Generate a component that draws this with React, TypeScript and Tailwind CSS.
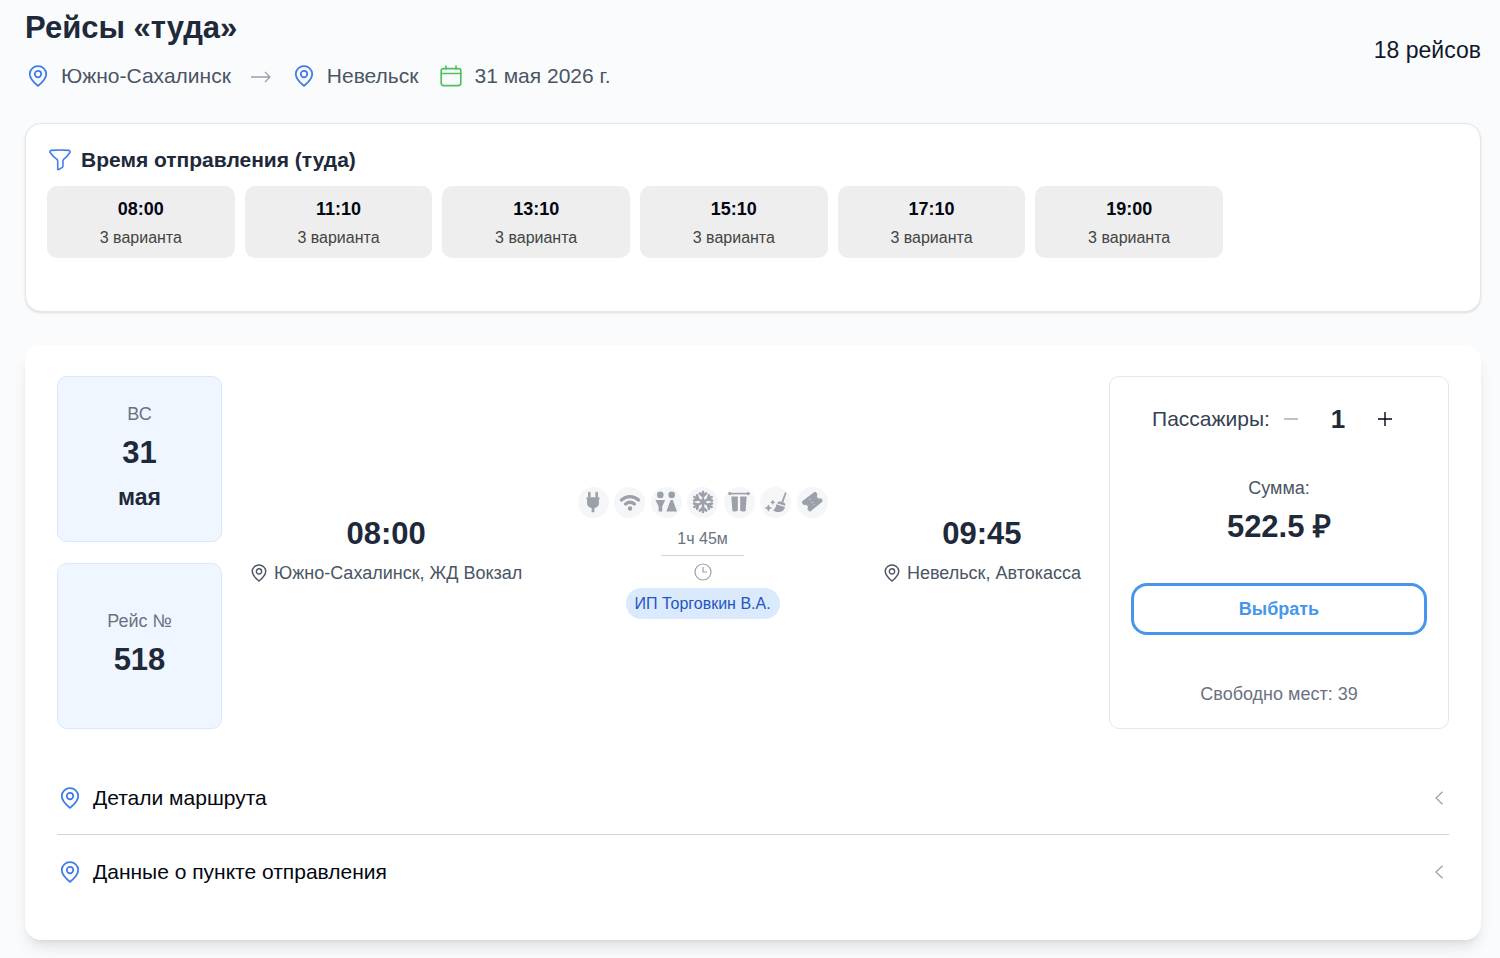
import React, { useState } from 'react';

type IconProps = { className?: string };

const PinIcon: React.FC<IconProps> = ({ className }) => (
  <svg className={className} viewBox="0 0 24 24" fill="none" stroke="currentColor" strokeWidth="1.9" strokeLinejoin="round" aria-hidden="true">
    <path d="M12 22.8c-2.600-2.200-9-7.200-9-13A8.900 8.900 0 0 1 12 1.300a8.900 8.900 0 0 1 9 8.500c0 5.800-6.400 10.800-9 13z" />
    <circle cx="12" cy="9.900" r="3.500" />
  </svg>
);

const ArrowIcon: React.FC<IconProps> = ({ className }) => (
  <svg className={className} viewBox="0 0 22 22" fill="none" stroke="currentColor" strokeWidth="1.300" aria-hidden="true">
    <path d="M1 12h19M15 7l5 5-5 5" />
  </svg>
);

const CalendarIcon: React.FC<IconProps> = ({ className }) => (
  <svg className={className} viewBox="0 0 24 24" fill="none" stroke="currentColor" strokeWidth="1.800" strokeLinecap="round" aria-hidden="true">
    <rect x="1.300" y="4" width="21.400" height="18.500" rx="2.500" />
    <path d="M1.500 9.300h21M6.500 1.300v3M17.500 1.300v3" />
  </svg>
);

const FilterIcon: React.FC<IconProps> = ({ className }) => (
  <svg className={className} viewBox="0 0 24 24" fill="none" stroke="currentColor" strokeWidth="1.700" strokeLinejoin="round" aria-hidden="true">
    <path d="M2.200 1.500c6.500-.5 13.100-.5 19.600 0 1.100.1 1.500 1.400.9 2.300-2.100 3.300-4.300 5.600-6.700 7.500-.6.500-.8 1-.8 1.700v5.700c0 .6-.2 1-.7 1.300l-4 2.500c-.5.300-1 0-1-.6V13c0-.7-.2-1.200-.8-1.700C6 9.400 3.500 7.100 1.300 3.800c-.6-.9-.2-2.200.9-2.300z" />
  </svg>
);

const ClockIcon: React.FC<IconProps> = ({ className }) => (
  <svg className={className} viewBox="0 0 18 18" fill="none" stroke="currentColor" strokeWidth="1.200" aria-hidden="true">
    <circle cx="9" cy="9" r="8" />
    <path d="M9 4v5h4" />
  </svg>
);

const ChevronIcon: React.FC<IconProps> = ({ className }) => (
  <svg className={className} viewBox="0 0 8 14" fill="none" stroke="currentColor" strokeWidth="1.300" aria-hidden="true">
    <path d="M7.500 .7L1 7l6.500 6.300" />
  </svg>
);

const PlugIcon = () => (
  <svg className="size-6" viewBox="0 0 24 24" fill="currentColor" aria-hidden="true">
    <rect x="7" y="1.800" width="2.600" height="6" rx="1.200" />
    <rect x="14.400" y="1.800" width="2.600" height="6" rx="1.200" />
    <path d="M5.600 7.200h12.800v2.200h-.5v4c0 2.500-2 4-4.500 4.600v4.200h-2.800V18c-2.500-.6-4.500-2.100-4.500-4.600v-4h-.5z" />
  </svg>
);

const WifiIcon = () => (
  <svg className="size-6" viewBox="0 0 24 24" fill="none" stroke="currentColor" strokeWidth="3.300" strokeLinecap="round" aria-hidden="true">
    <path d="M3.400 10c5-4.500 12.200-4.500 17.200 0M7.600 14c2.700-2.200 6.100-2.200 8.800 0" />
    <circle cx="12" cy="18.500" r="2.200" fill="currentColor" stroke="none" />
  </svg>
);

const RestroomIcon = () => (
  <svg className="size-6" viewBox="0 0 24 24" fill="currentColor" aria-hidden="true">
    <circle cx="6.300" cy="4.900" r="3.300" />
    <circle cx="17.700" cy="4.900" r="3.300" />
    <path d="M1.400 10h9.800L8.200 16.500v5H4.600v-5zM16.600 10h2.200l4.200 11.500H12.400z" />
  </svg>
);

const SnowflakeIcon = () => (
  <svg className="size-6" viewBox="0 0 24 24" fill="none" stroke="currentColor" strokeWidth="2.500" strokeLinecap="round" aria-hidden="true">
    <path d="M12 2v20M8.800 3.300L12 6.500l3.200-3.200M8.800 20.700l3.200-3.200 3.200 3.200" />
    <path d="M3.300 7l17.400 10M3 10.500l4.200-1.100L6.100 5.200M21 13.500l-4.200 1.100 1.100 4.200" />
    <path d="M20.700 7L3.300 17M21 10.500l-4.200-1.100 1.100-4.200M3 13.500l4.200 1.100-1.100 4.200" />
  </svg>
);

const CurtainIcon = () => (
  <svg className="size-6" viewBox="0 0 24 24" fill="currentColor" aria-hidden="true">
    <path d="M2.500 2.800h19v1.600h-19z" />
    <circle cx="2.800" cy="3.600" r="1.600" />
    <circle cx="21.200" cy="3.600" r="1.600" />
    <path d="M4.300 6.500h6.500v14.300c-1.700 1-3.700 1.100-5.400.2zM13.200 6.500h6.500l-1.100 14.500c-1.700.9-3.700.8-5.400-.2z" />
  </svg>
);

const BroomIcon = () => (
  <svg className="size-6" viewBox="0 0 24 24" fill="currentColor" aria-hidden="true">
    <path d="M21 2.300l1.500.6-3.500 10-1.700-.6z" />
    <path d="M14.500 11.800c2.600-.7 5.300.2 7 2.300l-.5 1.600-8.200-2.500zM12.300 14.300l8.600 2.700c-.3 2.500-1.900 4.100-4.300 4.700-2.900.6-5.900.1-7.600-1.800 1.800-.6 3-2.500 3.300-5.600z" />
    <path d="M4.400 14.800l.9 2.300 2.300.9-2.300.9-.9 2.300-.9-2.300-2.300-.9 2.300-.9zM8.700 10.200l.6 1.500 1.500.6-1.500.6-.6 1.500-.6-1.500-1.500-.6 1.500-.6z" stroke="currentColor" strokeWidth=".6" />
  </svg>
);

const TicketIcon = () => (
  <svg className="size-6" viewBox="0 0 24 24" fill="currentColor" aria-hidden="true">
    <path d="M14 2.300a1.600 1.600 0 0 1 2.200.2l1.500 1.800a2.500 2.500 0 0 0 3.200 3.800l1.300 1.600c.6.700.5 1.700-.2 2.300L11 20.900a1.600 1.600 0 0 1-2.300-.2l-1.400-1.700a2.500 2.500 0 0 0-3.300-3.700l-1.700-2c-.6-.7-.5-1.700.2-2.300z" />
    <path d="M9.800 9.300l.7.900M12 12l.7.900M14 14.400l.5.700" stroke="#f5f6f8" strokeWidth="1" />
  </svg>
);

const amenities = [
  { title: 'Розетка', icon: PlugIcon },
  { title: 'Wi-Fi', icon: WifiIcon },
  { title: 'Туалет', icon: RestroomIcon },
  { title: 'Кондиционер', icon: SnowflakeIcon },
  { title: 'Шторки', icon: CurtainIcon },
  { title: 'Чистый салон', icon: BroomIcon },
  { title: 'Билет', icon: TicketIcon },
];

const departureTimes = ['08:00', '11:10', '13:10', '15:10', '17:10', '19:00'];

const sections = ['Детали маршрута', 'Данные о пункте отправления'];

const Stop: React.FC<{ time: string; place: string }> = ({ time, place }) => (
  <div className="flex flex-col items-center pb-1">
    <div className="text-[31px] leading-10 font-bold text-gray-800">{time}</div>
    <div className="mt-[5px] flex items-center gap-1.5 text-[18px] leading-7 text-gray-600">
      <PinIcon className="size-[18px]" />
      {place}
    </div>
  </div>
);

const App: React.FC = () => {
  const [selectedTime, setSelectedTime] = useState<string | null>(null);
  const [passengers, setPassengers] = useState(1);

  return (
    <div className="min-h-screen bg-[#fafbfd] pt-2 pr-[19px] pb-[17px] pl-[25px] font-['Liberation_Sans',Arial,sans-serif]">
      {/* Header */}
      <header className="flex items-center justify-between">
        <div>
          <h1 className="text-[31px] leading-10 font-bold text-gray-800">Рейсы «туда»</h1>
          <div className="mt-3 flex items-center text-[21px] leading-8 text-gray-600">
            <PinIcon className="mx-[2px] size-[22px] text-[#3f7bea]" />
            <span className="ml-2.5">Южно-Сахалинск</span>
            <ArrowIcon className="mx-[19px] size-[22px] text-gray-400" />
            <PinIcon className="mx-[2px] size-[22px] text-[#3f7bea]" />
            <span className="ml-2.5">Невельск</span>
            <CalendarIcon className="ml-[22px] size-[22px] text-[#4dc25c]" />
            <span className="ml-3">31 мая 2026 г.</span>
          </div>
        </div>
        <div className="text-[23px] leading-8 text-gray-900">18 рейсов</div>
      </header>

      {/* Departure time filter */}
      <section className="mt-[31px] rounded-2xl border border-gray-200 bg-white px-[21px] pt-5 pb-[53px] shadow-sm">
        <h2 className="flex items-center gap-2.5 text-[21px] leading-8 font-bold text-gray-800">
          <FilterIcon className="ml-[2px] size-[22px] text-[#3f7bea]" />
          Время отправления (туда)
        </h2>
        <div className="mt-2.5 grid max-w-[1176px] grid-cols-6 gap-2.5">
          {departureTimes.map(time => (
            <button
              key={time}
              onClick={() => setSelectedTime(time)}
              aria-pressed={selectedTime === time}
              className="flex cursor-pointer flex-col items-center rounded-[10px] bg-[#eeeeee] pt-2 pb-1.5"
            >
              <span className="text-[18px] leading-[30px] font-bold text-gray-950">{time}</span>
              <span className="text-[16px] leading-7 text-[#444444]">3 варианта</span>
            </button>
          ))}
        </div>
      </section>

      {/* Trip card */}
      <section className="mt-[33px] rounded-2xl bg-white px-8 py-[31px] shadow-lg">
        <div className="flex">
          <div className="flex w-[165px] flex-col gap-[21px]">
            <div className="flex h-[166px] flex-col items-center justify-center rounded-[10px] border border-[#dbe8fb] bg-[#f0f6ff] pb-1">
              <div className="text-[18px] leading-7 text-gray-500">ВС</div>
              <div className="mt-[3px] text-[31px] leading-[44px] font-bold text-gray-800">31</div>
              <div className="mt-1 text-[23px] leading-9 font-bold text-gray-800">мая</div>
            </div>
            <div className="flex h-[166px] flex-col items-center justify-center rounded-[10px] border border-[#dbe8fb] bg-[#f0f6ff] pb-1">
              <div className="text-[18px] leading-7 text-gray-500">Рейс №</div>
              <div className="mt-[3px] text-[31px] leading-[44px] font-bold text-gray-800">518</div>
            </div>
          </div>

          <div className="flex flex-1 items-center justify-between px-7">
            <Stop time="08:00" place="Южно-Сахалинск, ЖД Вокзал" />

            <div className="flex flex-col items-center">
              <div className="flex w-[250px] justify-between">
                {amenities.map(({ title, icon: Icon }) => (
                  <span key={title} aria-label={title} role="img" className="flex size-[31px] items-center justify-center rounded-full bg-[#f5f6f8] text-[#9ca0ab]">
                    <Icon />
                  </span>
                ))}
              </div>
              <div className="mt-[9px] w-[83px] border-b border-gray-300 pb-1 text-center text-[16px] leading-6 text-gray-500">1ч 45м</div>
              <ClockIcon className="mt-[7px] size-[18px] text-gray-400" />
              <div className="mt-[7px] rounded-full bg-[#dbe9fd] px-[9px] text-[16px] leading-[31px] text-[#1f57bd]">ИП Торговкин В.А.</div>
            </div>

            <Stop time="09:45" place="Невельск, Автокасса" />
          </div>

          {/* Price */}
          <div className="flex w-[340px] flex-col items-center rounded-[10px] border border-gray-200 px-[21px] pt-[26px]">
            <div className="flex items-center text-[21px] leading-8 text-gray-700">
              <span>Пассажиры:</span>
              <button
                aria-label="Убавить"
                disabled={passengers === 1}
                onClick={() => setPassengers(passengers - 1)}
                className="flex h-8 w-[42px] items-center justify-center text-gray-400"
              >
                <svg className="size-4" viewBox="0 0 16 16" stroke="currentColor" strokeWidth="1.300" aria-hidden="true">
                  <path d="M1 8h14" />
                </svg>
              </button>
              <span className="w-[52px] text-center text-[26px] font-bold text-gray-800">{passengers}</span>
              <button
                aria-label="Добавить"
                onClick={() => setPassengers(passengers + 1)}
                className="flex h-8 w-[42px] items-center justify-center text-gray-950"
              >
                <svg className="size-4" viewBox="0 0 16 16" stroke="currentColor" strokeWidth="1.400" aria-hidden="true">
                  <path d="M1 8h14M8 1v14" />
                </svg>
              </button>
            </div>
            <div className="mt-[39px] text-[18px] leading-7 text-gray-600">Сумма:</div>
            <div className="mt-[3px] text-[31px] leading-[44px] font-bold text-gray-800">522.5 ₽</div>
            <button className="mt-[34px] h-[52px] w-full cursor-pointer rounded-2xl border-[3px] border-[#4596ec] bg-white text-[18px] font-bold text-[#4596ec]">
              Выбрать
            </button>
            <div className="mt-[45px] text-[18px] leading-7 text-gray-500">Свободно мест: 39</div>
          </div>
        </div>

        {/* Collapsible sections */}
        <div className="mt-8 divide-y divide-gray-300">
          {sections.map(title => (
            <button key={title} className="flex h-[74px] w-full cursor-pointer items-center text-left text-[21px] text-gray-950">
              <PinIcon className="mx-[2px] size-[22px] text-[#3f7bea]" />
              <span className="ml-2.5 flex-1">{title}</span>
              <ChevronIcon className="mr-1.5 h-3.5 w-2 text-gray-400" />
            </button>
          ))}
        </div>
      </section>
    </div>
  );
};

export default App;
